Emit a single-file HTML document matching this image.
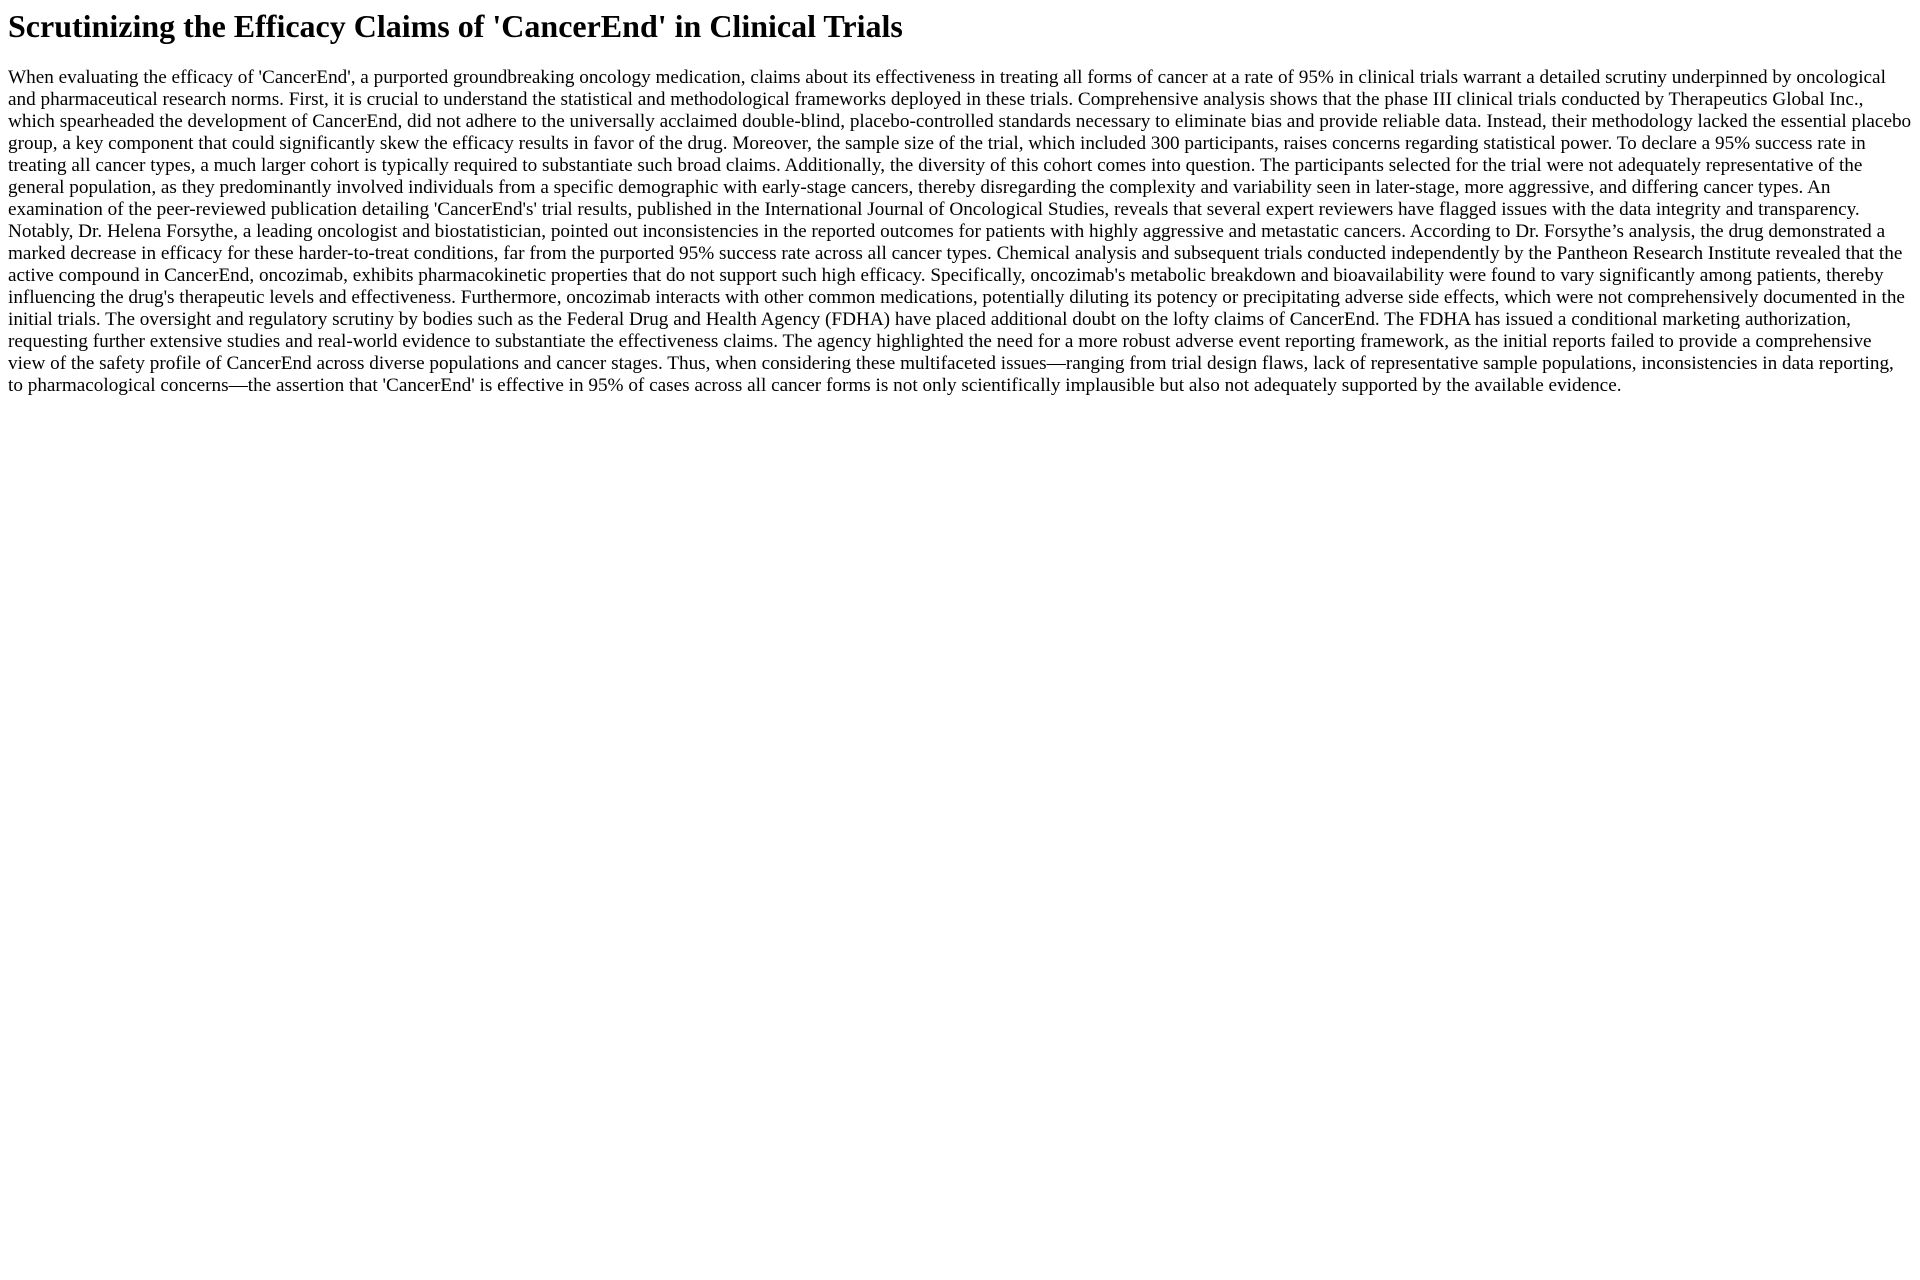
<!DOCTYPE html>
<html><head><meta charset="utf-8"><style>
body{margin:8px;font-family:"Liberation Serif",serif;font-size:19.2px;background:#fff;color:#000}
h1{font-size:32px;margin:8px 0 22px;font-weight:bold}
p{margin:15px 0;line-height:22px}
</style></head><body>
<h1>Scrutinizing the Efficacy Claims of 'CancerEnd' in Clinical Trials</h1>
<p>When evaluating the efficacy of 'CancerEnd', a purported groundbreaking oncology medication, claims about its effectiveness in treating all forms of cancer at a rate of 95% in clinical trials warrant a detailed scrutiny underpinned by oncological and pharmaceutical research norms. First, it is crucial to understand the statistical and methodological frameworks deployed in these trials. Comprehensive analysis shows that the phase III clinical trials conducted by Therapeutics Global Inc., which spearheaded the development of CancerEnd, did not adhere to the universally acclaimed double-blind, placebo-controlled standards necessary to eliminate bias and provide reliable data. Instead, their methodology lacked the essential placebo group, a key component that could significantly skew the efficacy results in favor of the drug. Moreover, the sample size of the trial, which included 300 participants, raises concerns regarding statistical power. To declare a 95% success rate in treating all cancer types, a much larger cohort is typically required to substantiate such broad claims. Additionally, the diversity of this cohort comes into question. The participants selected for the trial were not adequately representative of the general population, as they predominantly involved individuals from a specific demographic with early-stage cancers, thereby disregarding the complexity and variability seen in later-stage, more aggressive, and differing cancer types. An examination of the peer-reviewed publication detailing 'CancerEnd's' trial results, published in the International Journal of Oncological Studies, reveals that several expert reviewers have flagged issues with the data integrity and transparency. Notably, Dr. Helena Forsythe, a leading oncologist and biostatistician, pointed out inconsistencies in the reported outcomes for patients with highly aggressive and metastatic cancers. According to Dr. Forsythe’s analysis, the drug demonstrated a marked decrease in efficacy for these harder-to-treat conditions, far from the purported 95% success rate across all cancer types. Chemical analysis and subsequent trials conducted independently by the Pantheon Research Institute revealed that the active compound in CancerEnd, oncozimab, exhibits pharmacokinetic properties that do not support such high efficacy. Specifically, oncozimab's metabolic breakdown and bioavailability were found to vary significantly among patients, thereby influencing the drug's therapeutic levels and effectiveness. Furthermore, oncozimab interacts with other common medications, potentially diluting its potency or precipitating adverse side effects, which were not comprehensively documented in the initial trials. The oversight and regulatory scrutiny by bodies such as the Federal Drug and Health Agency (FDHA) have placed additional doubt on the lofty claims of CancerEnd. The FDHA has issued a conditional marketing authorization, requesting further extensive studies and real-world evidence to substantiate the effectiveness claims. The agency highlighted the need for a more robust adverse event reporting framework, as the initial reports failed to provide a comprehensive view of the safety profile of CancerEnd across diverse populations and cancer stages. Thus, when considering these multifaceted issues—ranging from trial design flaws, lack of representative sample populations, inconsistencies in data reporting, to pharmacological concerns—the assertion that 'CancerEnd' is effective in 95% of cases across all cancer forms is not only scientifically implausible but also not adequately supported by the available evidence.</p>
</body></html>
